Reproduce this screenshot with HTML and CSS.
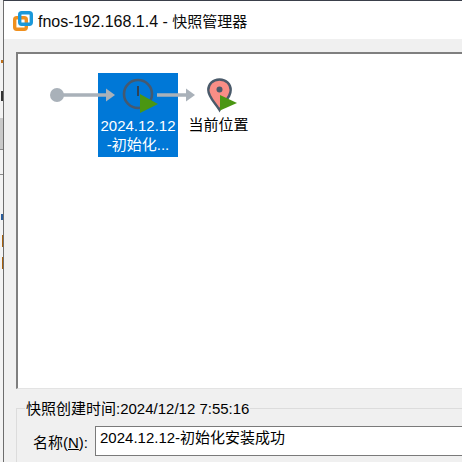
FILE: index.html
```html
<!DOCTYPE html>
<html lang="zh">
<head>
<meta charset="utf-8">
<title>快照管理器</title>
<link rel="stylesheet" href="styles.css">
</head>
<body>
<div class="desktop">
  <aside class="behind">
    <span class="b b1"></span><span class="b b2"></span><span class="b b3"></span><span class="b b4"></span>
    <span class="b b5"></span><span class="b b6"></span><span class="b b7"></span><span class="b b8"></span>
  </aside>
  <main class="window">
    <header class="titlebar">
      <svg class="logo" width="20" height="20" viewBox="0 0 20 20">
        <rect x="1.7" y="6.7" width="11.6" height="11.6" rx="2" fill="none" stroke="#f0901e" stroke-width="3.4"/>
        <rect x="6.700" y="1.700" width="11.6" height="11.6" rx="2" fill="none" stroke="#1b98d9" stroke-width="3.4"/>
      </svg>
      <h1 class="title">fnos-192.168.1.4 - <span class="title-cjk">快照管理器</span></h1>
    </header>
    <div class="body">
      <section class="canvas">
        <div class="node selected">
          <div class="label">2024.12.12<br>-初始化...</div>
        </div>
        <svg class="wire" width="240" height="70" viewBox="0 0 240 70">
          <path d="M39 41 H90" stroke="#a9b1b9" stroke-width="3.5" fill="none"/>
          <circle cx="39" cy="41" r="7" fill="#a9b1b9"/>
          <path d="M88 34.5 L97 41 L88 47.5 Z" fill="#a9b1b9"/>
          <path d="M139 41 H170" stroke="#a9b1b9" stroke-width="3.5" fill="none"/>
          <path d="M168 34.5 L177 41 L168 47.5 Z" fill="#a9b1b9"/>
          <circle cx="120" cy="40" r="14" fill="none" stroke="#45596f" stroke-width="2.6"/>
          <path d="M120 32 V42" stroke="#2f4257" stroke-width="2"/>
          <path d="M122 40 L140 50 L122 59 Z" fill="#4a9612"/>
          <path d="M201.500 25.500 C194.500 25.500 190.300 30.500 190.300 36 C190.300 43 197 48.500 201.500 56 C203 53 204 51 206 49 C210 44 212.700 41 212.700 36 C212.700 30.500 208.500 25.500 201.500 25.500 Z" fill="#f98e86" stroke="#4a5a6a" stroke-width="2.4"/>
          <circle cx="201.500" cy="35.500" r="3" fill="#4a5a6a"/>
          <path d="M202 41 L219 49 L202 56.500 Z" fill="#4a9612"/>
        </svg>
        <div class="node current">
          <div class="label">当前位置</div>
        </div>
      </section>
      <fieldset class="details">
        <legend class="group-title">快照创建时间:2024/12/12 7:55:16</legend>
        <div class="field">
          <label class="field-label" for="name">名称(<u>N</u>):</label>
          <input class="field-input" id="name" value="2024.12.12-初始化安装成功">
        </div>
      </fieldset>
    </div>
  </main>
</div>
</body>
</html>
```
FILE: styles.css
```css
* { box-sizing: border-box; }
html, body { margin: 0; padding: 0; }
body {
  width: 462px;
  height: 462px;
  overflow: hidden;
  font-family: "Liberation Sans", "Noto Sans CJK SC", sans-serif;
  font-size: 15px;
  color: #000;
}
.desktop { display: flex; width: 462px; height: 462px; background: #f3f3f3; }
.behind { position: relative; width: 3px; flex: none; background: #f3f3f3; }
.b { position: absolute; left: 0; width: 3px; }
.b1 { top: 60px; height: 3px; left: 1px; width: 2px; background: #c0701a; }
.b2 { top: 91px; height: 10px; left: 1px; width: 2px; background: #333; }
.b3 { top: 118px; height: 31px; background: #c9c9c9; }
.b4 { top: 149px; height: 1px; background: #8a8a8a; }
.b5 { top: 174px; height: 1px; background: #8a8a8a; }
.b6 { top: 214px; height: 6px; left: 1px; width: 2px; background: #2b5c9a; }
.b7 { top: 235px; height: 12px; left: 2px; width: 1px; background: #a8610c; }
.b8 { top: 257px; height: 12px; left: 2px; width: 1px; background: #a8610c; }
.window {
  flex: 1;
  min-width: 0;
  display: flex;
  flex-direction: column;
  border-left: 1px solid #6d6d6d;
  border-top: 1px solid #3a3f4a;
  background: #f0f0f0;
}
.titlebar {
  height: 38px;
  flex: none;
  display: flex;
  align-items: center;
  gap: 5px;
  padding: 0 0 0 9px;
  background: #fff;
}
.logo { flex: none; margin-top: 1px; }
.title {
  margin: 0;
  font-size: 16px;
  font-weight: 400;
  color: #0b0b0b;
  white-space: nowrap;
}
.title-cjk { font-size: 15px; }
.body { flex: 1; display: flex; flex-direction: column; padding: 13px 0 0 12px; }
.canvas {
  position: relative;
  height: 337px;
  flex: none;
  background: #fff;
  border-top: 2px solid #7f7f7f;
  border-left: 2px solid #7f7f7f;
  border-bottom: 1px solid #e3e3e3;
}
.wire { position: absolute; left: 0; top: 0; }
.node { position: absolute; display: flex; flex-direction: column; align-items: center; }
.selected { left: 80px; top: 19px; width: 80px; height: 84px; background: #0078d7; color: #fff; padding-top: 43px; }
.current { left: 171px; top: 61px; width: 59px; }
.label { font-size: 15px; line-height: 19px; text-align: center; white-space: nowrap; }
.details {
  flex: 1;
  min-width: 0;
  margin: 10px 0 0;
  padding: 0 0 0 16px;
  border: none;
  border-top: 1px solid #dcdcdc;
  border-left: 1px solid #dcdcdc;
}
.group-title { padding: 0 1px; margin-left: -8px; font-size: 15px; line-height: 19px; }
.field { display: flex; align-items: center; gap: 7px; margin-top: 8px; height: 30px; }
.field-label { font-size: 15px; white-space: nowrap; }
.field-input {
  flex: 1;
  min-width: 0;
  height: 30px;
  padding: 0 4px 9px;
  border: 1px solid #7a7a7a;
  border-right: none;
  border-radius: 0;
  background: #fff;
  font: inherit;
  font-size: 15px;
  color: #000;
  outline: none;
}
```
